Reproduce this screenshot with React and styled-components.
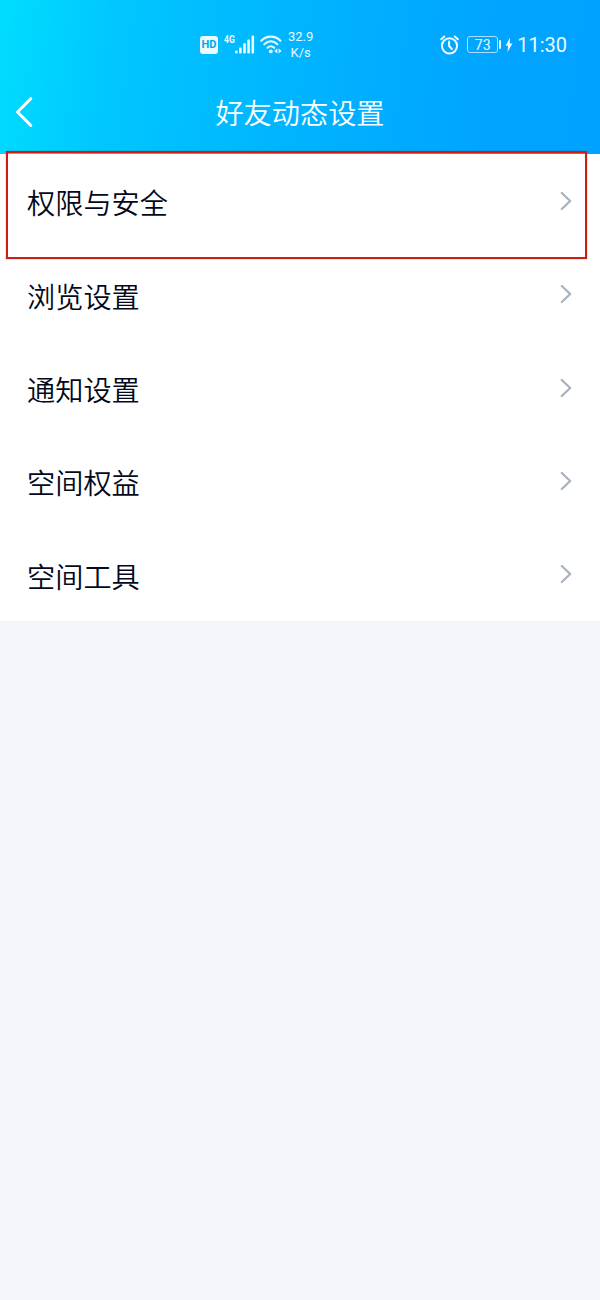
import React from "react";
import styled, { createGlobalStyle } from "styled-components";

const items = ["权限与安全", "浏览设置", "通知设置", "空间权益", "空间工具"];

const App = () => {
  return (
    <>
      <GlobalStyle />
      <Page>
        <Header>
          <StatusBar>
            <Network>
              <HdIcon />
              <SignalIcon />
              <WifiIcon />
              <Speed>
                <span>32.9</span>
                <span>K/s</span>
              </Speed>
            </Network>
            <Device>
              <AlarmIcon />
              <Battery>73</Battery>
              <BatteryTip />
              <BoltIcon />
              <Time>11:30</Time>
            </Device>
          </StatusBar>
          <TitleBar>
            <BackButton aria-label="返回">
              <svg width="20" height="32" viewBox="0 0 20 32" fill="none">
                <path
                  d="M16.8 2.6L3.4 16L16.8 29.4"
                  stroke="#fff"
                  strokeWidth="3"
                  strokeLinecap="round"
                  strokeLinejoin="round"
                />
              </svg>
            </BackButton>
            <Title>好友动态设置</Title>
          </TitleBar>
        </Header>
        <List>
          {items.map((label, index) => (
            <Row key={label}>
              <Label>{label}</Label>
              <ChevronIcon />
              {index === 0 && <Highlight />}
            </Row>
          ))}
        </List>
      </Page>
    </>
  );
};

export default App;

const HdIcon = () => (
  <HdBadge>
    <span>HD</span>
  </HdBadge>
);

const SignalIcon = () => (
  <Signal>
    <Generation>4G</Generation>
    <svg width="20" height="20" viewBox="0 0 20 20" fill="#eafaff">
      <rect x="0" y="15.4" width="2.6" height="3.2" rx="0.8" />
      <rect x="4.1" y="12.4" width="2.6" height="6.2" rx="0.8" />
      <rect x="8.2" y="8.2" width="2.6" height="10.4" rx="0.8" />
      <rect x="12.3" y="4.4" width="2.6" height="14.2" rx="0.8" />
      <rect x="16.5" y="0.6" width="2.6" height="18" rx="0.8" />
    </svg>
  </Signal>
);

const WifiIcon = () => (
  <svg width="24" height="20" viewBox="0 0 24 20" fill="none">
    <g stroke="#eafaff" strokeWidth="2.1" strokeLinecap="round">
      <path d="M1.3 5.7C6.7 0.3 15 0.3 20.4 5.7" />
      <path d="M4.3 9.3C8.3 5.4 13.4 5.4 17.4 9.3" />
      <path d="M7.5 12.7C9.6 10.9 12.1 10.9 14.2 12.7" />
    </g>
    <circle cx="10.8" cy="16.4" r="1.9" fill="#eafaff" />
    <path d="M17.3 13.6V18.6L14.3 16.1ZM18.6 13.6V18.6L21.6 16.1Z" fill="#eafaff" />
  </svg>
);

const AlarmIcon = () => (
  <svg width="20" height="20" viewBox="0 0 20 20" fill="none">
    <g stroke="#f0faff" strokeWidth="2" strokeLinecap="round">
      <circle cx="9.5" cy="10.8" r="7.6" />
      <path d="M9.1 6.6V11L11.9 14" strokeLinejoin="round" />
      <path d="M1.2 4.3L4.3 1.5M14.8 1.5L17.9 4.3" />
    </g>
  </svg>
);

const BoltIcon = () => (
  <Bolt width="8" height="16" viewBox="0 0 8 16" fill="#f0faff">
    <path d="M5 0.8L0.6 8.8H3.1L2.5 15L7.5 6.5H4.7Z" />
  </Bolt>
);

const ChevronIcon = () => (
  <Chevron width="14" height="20" viewBox="0 0 14 20" fill="none">
    <path
      d="M2.8 2L11.2 10L2.8 18"
      stroke="#a8b3c0"
      strokeWidth="2.3"
      strokeLinecap="round"
      strokeLinejoin="round"
    />
  </Chevron>
);

const GlobalStyle = createGlobalStyle`
  body {
    margin: 0;
    background: #f4f5fa;
  }
`;

const Page = styled.main`
  width: 600px;
  min-height: 1300px;
  font-family: "Noto Sans CJK SC", sans-serif;
  background: #f4f5fa;
`;

const Header = styled.header`
  height: 153.6px;
  display: flex;
  flex-direction: column;
  color: #fff;
  background: linear-gradient(97deg, #00ddff 0%, #00d6ff 6%, #00c6ff 20%, #00b4ff 50%, #00a5ff 80%, #00a2ff 100%);
`;

const StatusBar = styled.div`
  display: flex;
  justify-content: space-between;
  box-sizing: border-box;
  height: 74px;
  padding: 15px 33px 0 200px;
  font-family: Roboto, sans-serif;
  color: #eafaff;
`;

const Network = styled.div`
  display: flex;
  align-items: center;
`;

const HdBadge = styled.div`
  display: flex;
  align-items: center;
  justify-content: center;
  width: 18px;
  height: 18px;
  border-radius: 3px;
  background: #eafaff;
  color: #00a9e8;
  font-size: 11px;
  font-weight: 700;
  line-height: 18px;
`;

const Signal = styled.div`
  display: flex;
  align-items: flex-start;
  margin-left: 6px;
  margin-right: 5px;
`;

const Generation = styled.span`
  width: 11px;
  font-size: 10.5px;
  font-weight: 700;
  line-height: 9px;
  transform: scaleX(0.82);
  transform-origin: left;
`;

const Speed = styled.div`
  display: flex;
  flex-direction: column;
  align-items: center;
  margin-left: 4px;
  font-size: 13px;
  line-height: 15.5px;
`;

const Device = styled.div`
  display: flex;
  align-items: center;
`;

const Battery = styled.div`
  box-sizing: border-box;
  width: 31px;
  height: 17px;
  margin-left: 7px;
  border: 1px solid #a9e0ff;
  border-radius: 3px;
  font-size: 14px;
  line-height: 16px;
  text-align: center;
`;

const BatteryTip = styled.div`
  width: 2px;
  height: 9px;
  margin-left: 1px;
  border-radius: 1px;
  background: #eafaff;
`;

const Bolt = styled.svg`
  margin: 0 4px;
`;

const Time = styled.span`
  font-size: 20px;
  line-height: 24px;
`;

const TitleBar = styled.div`
  display: grid;
  grid-template-columns: 60px 1fr 60px;
  align-items: center;
  height: 76px;
`;

const BackButton = styled.button`
  display: flex;
  padding: 0 0 0 14px;
  border: none;
  background: none;
`;

const Title = styled.h1`
  margin: 0;
  font-size: 28.2px;
  font-weight: 350;
  line-height: 42px;
  text-align: center;
`;

const List = styled.section`
  background: #fff;
`;

const Row = styled.div`
  position: relative;
  display: flex;
  align-items: center;
  justify-content: space-between;
  box-sizing: border-box;
  height: 93.4px;
  padding: 4px 27px 0 27px;
`;

const Label = styled.span`
  font-size: 28.2px;
  font-weight: 350;
  line-height: 42px;
  color: #03081a;
`;

const Chevron = styled.svg`
  margin-bottom: 3px;
`;

/* red frame drawn over the first row, slightly taller than it */
const Highlight = styled.div`
  position: absolute;
  top: -2.6px;
  left: 6px;
  box-sizing: border-box;
  width: 581px;
  height: 108px;
  border: 2px solid #cb1f14;
  box-shadow: 0 0 1px rgba(80, 60, 60, 0.7);
`;
